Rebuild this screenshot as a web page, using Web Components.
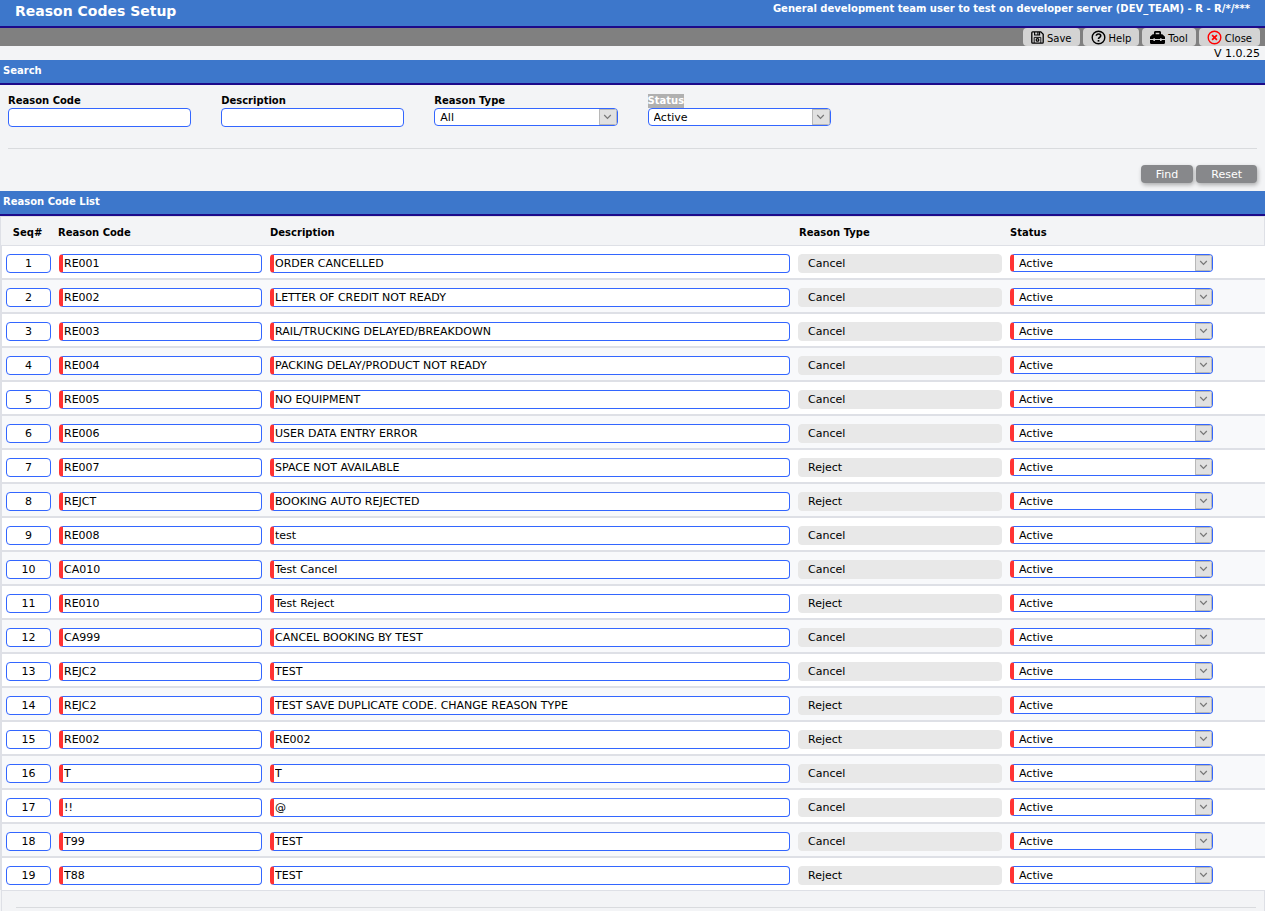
<!DOCTYPE html>
<html lang="en">
<head>
<meta charset="utf-8">
<title>Reason Codes Setup</title>
<style>
  html { background: #f3f4f6; }
  body {
    margin: 0;
    font: 11px/14px "DejaVu Sans", Verdana, sans-serif;
    color: #000;
    --bar: #3d77cb;
    --bar-edge: #1d0a8a;
    --field-edge: #3366ff;
    --line: #dee0e6;
    --required: #ff3333;
  }
</style>
</head>
<body>
<reason-codes-page></reason-codes-page>

<script>
const define = (name, html, init) => {
  const template = document.createElement('template');
  template.innerHTML = html;
  customElements.define(name, class extends HTMLElement {
    constructor() {
      super();
      this.attachShadow({ mode: 'open' }).append(template.content.cloneNode(true));
    }
    connectedCallback() {
      if (init && !this.ready) { this.ready = true; init(this, this.shadowRoot); }
    }
  });
};

define('page-header', `
  <style>
    :host { display: flex; justify-content: space-between; align-items: flex-start;
      height: 26px; padding: 0 15px; background: var(--bar); color: #fff;
      border-bottom: 2px solid var(--bar-edge); font-weight: bold; }
    h1 { margin: 0; font-size: 14px; line-height: 22px; }
    .user { font-size: 10px; line-height: 17px; }
  </style>
  <h1><slot></slot></h1>
  <div class="user"><slot name="user"></slot></div>`);

define('tool-button', `
  <style>
    :host { display: block; }
    button { display: flex; align-items: center; gap: 3px; height: 18px; margin: 0;
      padding: 0 8px; border: 0; border-radius: 4px; background: #d3d3d3;
      color: #000; font: inherit; font-size: 10px; white-space: nowrap; }
    .text { padding-top: 3px; }
    ::slotted(svg) { display: block; flex: none; }
  </style>
  <button type="button"><slot name="icon"></slot><span class="text"><slot></slot></span></button>`);

define('tool-bar', `
  <style>
    :host { display: flex; justify-content: flex-end; gap: 3px; height: 18px;
      padding-right: 5px; background: #808080; }
  </style>
  <slot></slot>`);

define('section-bar', `
  <style>
    :host { display: block; height: 23px; padding: 0 3px; background: var(--bar);
      border-bottom: 2px solid var(--bar-edge); color: #fff; }
    h2 { margin: 0; font-size: 10px; line-height: 21px; }
  </style>
  <h2><slot></slot></h2>`);

define('text-box', `
  <style>
    :host { display: block; }
    label { display: block; width: max-content; font-weight: bold; font-size: 10px; line-height: 14px; }
    label:empty { display: none; }
    input { display: block; box-sizing: border-box; width: 100%; height: 19px; margin: 0;
      padding: 0 4px; border: 1px solid var(--field-edge); border-radius: 4px;
      background: #fff; color: #000; font: inherit; outline: 0; }
    :host([required]) input { border-left: 4px solid var(--required); padding-left: 1px; }
    :host([centered]) input { text-align: center; }
    :host([locked]) input { border-color: #e8e8e8; background: #e8e8e8; padding-left: 9px; }
  </style>
  <label for="box"></label><input id="box" type="text">`,
  (host, root) => {
    const input = root.querySelector('input');
    root.querySelector('label').textContent = host.getAttribute('label') || '';
    input.value = host.getAttribute('value') || '';
    input.readOnly = host.hasAttribute('locked');
    if (host.hasAttribute('name')) input.setAttribute('aria-label', host.getAttribute('name'));
  });

define('select-box', `
  <style>
    :host { display: block; }
    label { display: block; width: max-content; font-weight: bold; font-size: 10px; line-height: 14px; }
    label:empty { display: none; }
    :host([marked]) label { background: #b0b0b0; background-clip: content-box; color: #fff; }
    .frame { display: grid; grid-template-columns: 1fr 17px; box-sizing: border-box; height: 18px;
      border: 1px solid var(--field-edge); border-radius: 4px; overflow: hidden; background: #fff; }
    :host([label]) .frame { grid-template-columns: 1fr 18px; }
    :host([required]) .frame { border-left: 4px solid var(--required); }
    select { grid-area: 1 / 1 / 2 / 3; appearance: none; box-sizing: border-box; width: 100%; height: 16px; margin: 0;
      padding: 2px 20px 0 5px; border: 0; background: none; color: #000; font: inherit; outline: 0; }
    .arrow { grid-area: 1 / 2; display: grid; place-items: center; box-sizing: border-box;
      border: 1px solid #b8b8b8; background: #e1e1e1; pointer-events: none; }
  </style>
  <label for="box"></label>
  <div class="frame">
    <select id="box"></select>
    <span class="arrow"><svg width="9" height="6" viewBox="0 0 9 6" fill="none" stroke="#777" stroke-width="1.2"><path d="M1.2 1l3.3 3.3L7.8 1"/></svg></span>
  </div>`,
  (host, root) => {
    root.querySelector('label').textContent = host.getAttribute('label') || '';
    const select = root.querySelector('select');
    for (const text of host.getAttribute('options').split(',')) select.add(new Option(text));
    if (host.hasAttribute('name')) select.setAttribute('aria-label', host.getAttribute('name'));
  });

define('action-button', `
  <style>
    :host { display: block; }
    button { display: block; height: 18px; margin: 0; padding: 2px 15px 0; border: 0; border-radius: 4px;
      background: #87888b; color: #fff; font: inherit;
      box-shadow: 1px 2px 4px rgba(0,0,0,.3); }
  </style>
  <button type="button"><slot></slot></button>`);

define('search-panel', `
  <style>
    :host { display: block; padding: 9px 8px 8px; }
    .fields { display: grid; grid-template-columns: repeat(6, 1fr); column-gap: 30px; }
    hr { height: 1px; margin: 21px 0 16px; border: 0; background: #d9dbde; }
    .actions { display: flex; justify-content: flex-end; gap: 3px; }
  </style>
  <div class="fields"><slot></slot></div>
  <hr>
  <div class="actions"><slot name="actions"></slot></div>`);

define('reason-table', `
  <style>
    :host { display: block; }
    table { width: 100%; table-layout: fixed; border-collapse: separate; border-spacing: 0; }
    .seq { width: 55px; } .mid { width: 211px; } .type { width: 212px; } .end { width: 48px; }
    th { box-sizing: border-box; height: 30px; padding: 3px 4px 0; text-align: left; font-size: 10px;
      border-top: 1px solid var(--line); border-bottom: 1px solid var(--line); }
    th:first-child { text-align: center; padding-left: 3px; border-left: 1px solid var(--line); }
    th:nth-child(2) { padding-left: 3px; }
    th:nth-child(4) { padding-left: 5px; }
    th:last-child { border-right: 1px solid var(--line); }
    td { box-sizing: border-box; height: 34px; padding: 8px 4px 5px; vertical-align: top;
      background: #fff; border-bottom: 2px solid var(--line); }
    td:first-child { border-left: 2px solid var(--line); }
    tr:nth-child(even) td { background: #f8f9fb; }
    tr:last-child td { height: 32px; border-bottom: 0; }
  </style>
  <table>
    <colgroup><col class="seq"><col class="mid"><col><col class="type"><col class="mid"><col class="end"></colgroup>
    <thead><tr><th>Seq#</th><th>Reason Code</th><th>Description</th><th>Reason Type</th><th>Status</th><th></th></tr></thead>
    <tbody></tbody>
  </table>`,
  (host, root) => {
    const rows = [
      ['RE001', 'ORDER CANCELLED', 'Cancel'],
      ['RE002', 'LETTER OF CREDIT NOT READY', 'Cancel'],
      ['RE003', 'RAIL/TRUCKING DELAYED/BREAKDOWN', 'Cancel'],
      ['RE004', 'PACKING DELAY/PRODUCT NOT READY', 'Cancel'],
      ['RE005', 'NO EQUIPMENT', 'Cancel'],
      ['RE006', 'USER DATA ENTRY ERROR', 'Cancel'],
      ['RE007', 'SPACE NOT AVAILABLE', 'Reject'],
      ['REJCT', 'BOOKING AUTO REJECTED', 'Reject'],
      ['RE008', 'test', 'Cancel'],
      ['CA010', 'Test Cancel', 'Cancel'],
      ['RE010', 'Test Reject', 'Reject'],
      ['CA999', 'CANCEL BOOKING BY TEST', 'Cancel'],
      ['REJC2', 'TEST', 'Cancel'],
      ['REJC2', 'TEST SAVE DUPLICATE CODE. CHANGE REASON TYPE', 'Reject'],
      ['RE002', 'RE002', 'Reject'],
      ['T', 'T', 'Cancel'],
      ['!!', '@', 'Cancel'],
      ['T99', 'TEST', 'Cancel'],
      ['T88', 'TEST', 'Reject']
    ];
    root.querySelector('tbody').innerHTML = rows.map(([code, text, type], i) => `
      <tr>
        <td><text-box centered name="Sequence" value="${i + 1}"></text-box></td>
        <td><text-box required name="Reason code" value="${code}"></text-box></td>
        <td><text-box required name="Description" value="${text}"></text-box></td>
        <td><text-box locked name="Reason type" value="${type}"></text-box></td>
        <td><select-box required name="Status" options="Active,Inactive"></select-box></td>
        <td></td>
      </tr>`).join('');
  });

define('list-footer', `
  <style>
    :host { display: block; margin-left: 1px; padding: 16px 8px 3px 14px;
      border: 1px solid var(--line); border-bottom: 0; }
    hr { height: 1px; margin: 0; border: 0; background: #d9dbde; }
  </style>
  <hr>`);

define('reason-codes-page', `
  <style>
    :host { display: block; }
    .version { height: 14px; padding-right: 5px; text-align: right; line-height: 15px; }
  </style>
  <page-header>Reason Codes Setup<span slot="user">General development team user to test on developer server (DEV_TEAM) - R - R/*/***</span></page-header>
  <tool-bar>
    <tool-button><svg slot="icon" width="13" height="13" viewBox="0 0 13 13" fill="none" stroke="#000" stroke-width="1.3"><path d="M1.7.8h8.1l2.4 2.4v8.1c0 .5-.4.9-.9.9H1.7c-.5 0-.9-.4-.9-.9V1.7c0-.5.4-.9.9-.9z"/><path d="M3.6 1v3h5V1M6.9 1v3" stroke-width="1.1"/><path d="M3.2 12V6.4h6.6V12" stroke-width=".9"/><circle cx="6.5" cy="8.9" r="1.3"/></svg>Save</tool-button>
    <tool-button><svg slot="icon" width="15" height="15" viewBox="0 0 15 15" fill="none" stroke="#000" stroke-width="1.4"><circle cx="7.5" cy="7.5" r="6.3"/><path d="M5.3 5.8c.2-2.5 4.4-2.4 4.4 0 0 1.6-2.2 1.4-2.2 3.1" stroke-width="1.6"/><path d="M7.5 10v1.6" stroke-width="1.7"/></svg>Help</tool-button>
    <tool-button><svg slot="icon" width="15" height="13" viewBox="0 0 14 12"><path d="M3.7 3V1.4C3.7.6 4.3 0 5.1 0h3.8c.8 0 1.4.6 1.4 1.4V3h1.2L14 5.2v2.2h-3.2v-.8H9.4v.8H4.6v-.8H3.2v.8H0V5.2L2.5 3zM5.3 3h3.4V1.5H5.3zM0 8.4h3.2v.8h1.4v-.8h4.8v.8h1.4v-.8H14V11c0 .6-.4 1-1 1H1c-.6 0-1-.4-1-1z"/></svg>Tool</tool-button>
    <tool-button><svg slot="icon" width="15" height="15" viewBox="0 0 15 15" fill="none" stroke="#f00" stroke-width="1.4"><circle cx="7.5" cy="7.5" r="6.3"/><path d="M5.1 5.1l4.8 4.8M9.9 5.1L5.1 9.9" stroke-width="1.7"/></svg>Close</tool-button>
  </tool-bar>
  <div class="version">V 1.0.25</div>
  <section-bar>Search</section-bar>
  <search-panel>
    <text-box label="Reason Code"></text-box>
    <text-box label="Description"></text-box>
    <select-box label="Reason Type" options="All,Cancel,Reject"></select-box>
    <select-box marked label="Status" options="Active,Inactive"></select-box>
    <action-button slot="actions">Find</action-button>
    <action-button slot="actions">Reset</action-button>
  </search-panel>
  <section-bar>Reason Code List</section-bar>
  <reason-table></reason-table>
  <list-footer></list-footer>`);
</script>
</body>
</html>
